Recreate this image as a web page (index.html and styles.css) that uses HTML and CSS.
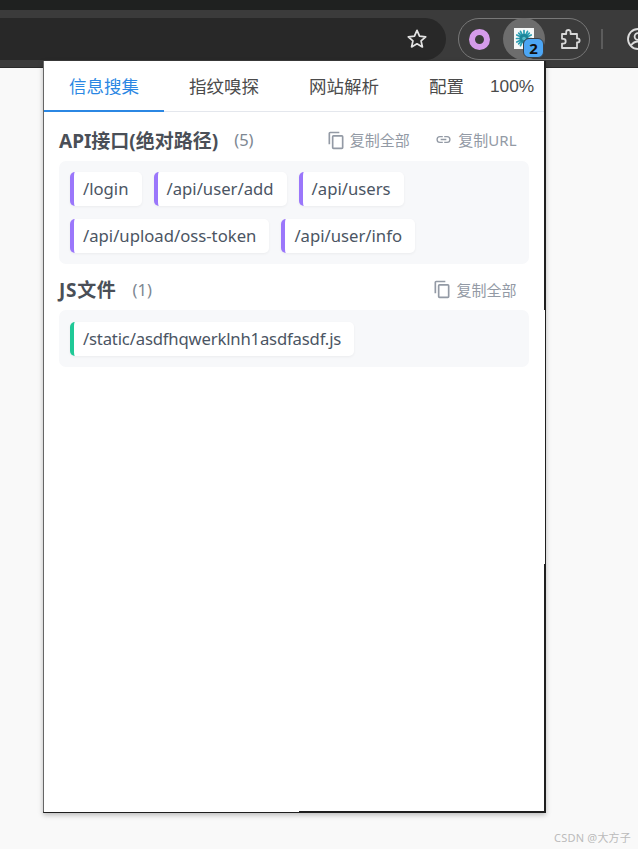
FILE: index.html
```html
<!DOCTYPE html>
<html lang="zh">
<head>
<meta charset="utf-8">
<title>信息搜集</title>
<link rel="stylesheet" href="styles.css">
</head>
<body>
<div class="topstrip"></div>
<header class="toolbar">
  <div class="omnibox">
    <svg class="star" viewBox="0 0 20 20" width="22" height="22"><path d="M10 2.200l2.300 5.200 5.600.6-4.200 3.700 1.200 5.500L10 14.400l-4.900 2.800 1.200-5.500L2.100 8l5.600-.6z" fill="none" stroke="#e3e3e3" stroke-width="1.600" stroke-linejoin="round"/></svg>
  </div>
  <div class="extgroup">
    <span class="ext-ring"></span>
    <span class="ext-active">
      <svg class="ext-logo" viewBox="0 0 20 21" width="20" height="21">
        <rect width="20" height="21" fill="#f6f8f8"/>
        <g stroke="#2a9db2" stroke-width="1.700" stroke-linecap="round">
          <path d="M10 2.500v16M2.500 10.500h15M4.700 5.200l10.600 10.600M15.300 5.200L4.700 15.800M6.500 3.300l7 14.400M13.500 3.300l-7 14.400M2.800 7l14.400 7M17.200 7L2.800 14"/>
        </g>
        <circle cx="10" cy="10.500" r="4.500" fill="#1d8599"/>
        <circle cx="10" cy="10.500" r="1.800" fill="#58bccb"/>
      </svg>
      <span class="ext-badge">2</span>
    </span>
    <svg class="puzzle" viewBox="0 0 22 22" width="22" height="22"><path d="M3 6h4.200V4.200a2.200 2.200 0 0 1 4.400 0V6H18v4.400h.6a2 2 0 0 1 0 4H18V20H3v-4.400h1.300a2.400 2.400 0 0 0 0-4.800H3z" fill="none" stroke="#d8d8d8" stroke-width="1.800" stroke-linejoin="round"/></svg>
  </div>
  <span class="divider"></span>
  <svg class="profile" viewBox="0 0 24 24" width="24" height="24"><circle cx="12" cy="12" r="10" fill="none" stroke="#dcdcdc" stroke-width="1.800"/><circle cx="12" cy="9.500" r="3.400" fill="none" stroke="#dcdcdc" stroke-width="1.800"/><path d="M5 18.500c2-3 4.500-4 7-4s5 1 7 4" fill="none" stroke="#dcdcdc" stroke-width="1.800"/></svg>
</header>

<main class="popup">
  <nav class="tabs">
    <span class="tab tab-active">信息搜集</span>
    <span class="tab">指纹嗅探</span>
    <span class="tab">网站解析</span>
    <span class="tab tab-last">配置</span>
    <span class="zoomlevel">100%</span>
  </nav>

  <section class="section section-api">
    <div class="section-head">
      <h2 class="section-title">API接口(绝对路径)</h2>
      <span class="count">(5)</span>
      <div class="actions">
        <span class="action">
          <svg class="icon" viewBox="0 0 24 24" width="20" height="20"><path d="M16 2H5a2 2 0 0 0-2 2v13h2V4h11z M19 6H9a2 2 0 0 0-2 2v13a2 2 0 0 0 2 2h10a2 2 0 0 0 2-2V8a2 2 0 0 0-2-2zm0 15H9V8h10z" fill="#939aa5"/></svg>
          复制全部
        </span>
        <span class="action action-link">
          <svg class="icon" viewBox="0 0 24 24" width="17" height="17"><path d="M3.900 12A3.100 3.100 0 0 1 7 8.900h4V7H7a5 5 0 0 0 0 10h4v-1.900H7A3.100 3.100 0 0 1 3.900 12zM8 13h8v-2H8zm9-6h-4v1.900h4a3.100 3.100 0 0 1 0 6.200h-4V17h4a5 5 0 0 0 0-10z" fill="#939aa5"/></svg>
          复制URL
        </span>
      </div>
    </div>
    <div class="taglist">
      <span class="tag">/login</span>
      <span class="tag">/api/user/add</span>
      <span class="tag">/api/users</span>
      <span class="tag">/api/upload/oss-token</span>
      <span class="tag">/api/user/info</span>
    </div>
  </section>

  <section class="section section-js">
    <div class="section-head">
      <h2 class="section-title">JS文件</h2>
      <span class="count">(1)</span>
      <div class="actions">
        <span class="action">
          <svg class="icon" viewBox="0 0 24 24" width="20" height="20"><path d="M16 2H5a2 2 0 0 0-2 2v13h2V4h11z M19 6H9a2 2 0 0 0-2 2v13a2 2 0 0 0 2 2h10a2 2 0 0 0 2-2V8a2 2 0 0 0-2-2zm0 15H9V8h10z" fill="#939aa5"/></svg>
          复制全部
        </span>
      </div>
    </div>
    <div class="taglist">
      <span class="tag tag-js">/static/asdfhqwerklnh1asdfasdf.js</span>
    </div>
  </section>
</main>
<div class="watermark">CSDN @大方子</div>
</body>
</html>
```
FILE: styles.css
```css
* { box-sizing: border-box; }
html, body { margin: 0; height: 100%; }
body {
  width: 638px;
  height: 849px;
  overflow: hidden;
  position: relative;
  background: #f9f9f9;
  font-family: "Noto Sans", "Noto Sans CJK SC", sans-serif;
}
.topstrip { height: 10px; background: #1f2120; }
.toolbar {
  height: 58px;
  background: #3b3b3b;
  border-bottom: 1px solid #2a2a2a;
  display: flex;
  align-items: flex-start;
  padding-top: 8px;
}
.omnibox {
  width: 446px;
  height: 42px;
  background: #282828;
  border-radius: 0 21px 21px 0;
  display: flex;
  align-items: center;
  justify-content: flex-end;
  padding-right: 18px;
  flex: none;
}
.star { display: block; }
.extgroup {
  margin-left: 12px;
  width: 132px;
  height: 42px;
  border: 1px solid #787878;
  border-radius: 21px;
  display: flex;
  align-items: center;
  position: relative;
  flex: none;
}
.ext-ring {
  width: 21px;
  height: 21px;
  margin-left: 10px;
  border-radius: 50%;
  border: 6px solid #d59bea;
  flex: none;
}
.ext-active {
  width: 42px;
  height: 42px;
  margin-left: 13px;
  background: #6d6d6d;
  border-radius: 50%;
  position: relative;
  flex: none;
  display: flex;
  align-items: center;
  justify-content: center;
}
.ext-logo { display: block; margin-top: -2px; margin-left: -1px; }
.ext-badge {
  position: absolute;
  left: 20px;
  top: 20px;
  width: 21px;
  height: 20px;
  background: #4ca6f5;
  border: 1px solid #3a3f45;
  border-radius: 6px;
  color: #111;
  font: bold 15px/18px "Noto Sans", sans-serif;
  text-align: center;
}
.puzzle { margin-left: 14px; flex: none; }
.divider {
  width: 2px;
  height: 20px;
  background: #5c5c5c;
  margin: 11px 0 0 11px;
  flex: none;
}
.profile { margin: 9px 0 0 23px; flex: none; }

.popup {
  position: absolute;
  left: 43px;
  top: 61px;
  width: 503px;
  height: 752px;
  background: #fff;
  border-left: 1px solid #666;
  border-right: 2px solid #1f1f1f;
  border-bottom: 2px solid #1f1f1f;
  box-shadow: 0 2px 5px rgba(0,0,0,.25);
}
.popup::before {
  content: "";
  position: absolute;
  top: 249px;
  right: -1px;
  width: 1px;
  height: 254px;
  background: #fff;
}
.popup::after {
  content: "";
  position: absolute;
  left: 0;
  bottom: -1px;
  width: 255px;
  height: 1px;
  background: #fff;
}
.tabs {
  height: 51px;
  border-bottom: 1px solid #e4e7ed;
  display: flex;
  align-items: center;
  font-size: 17.500px;
}
.tab {
  height: 51px;
  padding-left: 25px;
  line-height: 50px;
  color: #4b4b4b;
  flex: none;
  width: 120px;
  white-space: nowrap;
}
.tab-active {
  color: #2b87e3;
  border-bottom: 2px solid #2b87e3;
}
.tab-last { width: 85px; }
.zoomlevel {
  font-family: "Liberation Sans", sans-serif;
  font-size: 17.300px;
  color: #4b4b4b;
  margin: 1px 0 0 1px;
}
.section { padding: 0 15px; }
.section-head {
  height: 49px;
  display: flex;
  align-items: center;
  padding-top: 4px;
}
.section-api .section-head { padding-top: 6px; }
.section-js .section-head { height: 46px; }
.section-title {
  margin: 0;
  font-size: 19px;
  font-weight: 700;
  color: #4a4f57;
}
.section-js .section-title { letter-spacing: .7px; }
.count {
  margin-left: 16px;
  font-size: 16.500px;
  color: #7d8792;
}
.actions {
  margin-left: auto;
  display: flex;
  gap: 25.500px;
  padding-right: 12.500px;
}
.action {
  display: flex;
  align-items: center;
  gap: 4px;
  font-size: 15px;
  color: #939aa5;
  white-space: nowrap;
}
.action-link { gap: 6px; }
.icon { display: block; flex: none; }
.taglist {
  background: #f7f8fa;
  border-radius: 7px;
  padding: 11px;
  display: flex;
  flex-wrap: wrap;
  gap: 13px 12px;
}
.section-js .taglist { padding-top: 12px; }
.tag {
  height: 34px;
  line-height: 33px;
  padding: 0 13px 0 9px;
  background: #fff;
  border-left: 4px solid #9b77fb;
  border-radius: 5px;
  font-size: 16.700px;
  color: #4b5563;
  box-shadow: 0 1px 3px rgba(0,0,0,.05);
  white-space: nowrap;
}
.tag-js {
  border-left-color: #20c997;
  letter-spacing: -.18px;
}
.watermark {
  position: absolute;
  right: 7px;
  top: 831px;
  font-size: 11px;
  line-height: 14px;
  letter-spacing: .2px;
  color: #bbb;
}
```
